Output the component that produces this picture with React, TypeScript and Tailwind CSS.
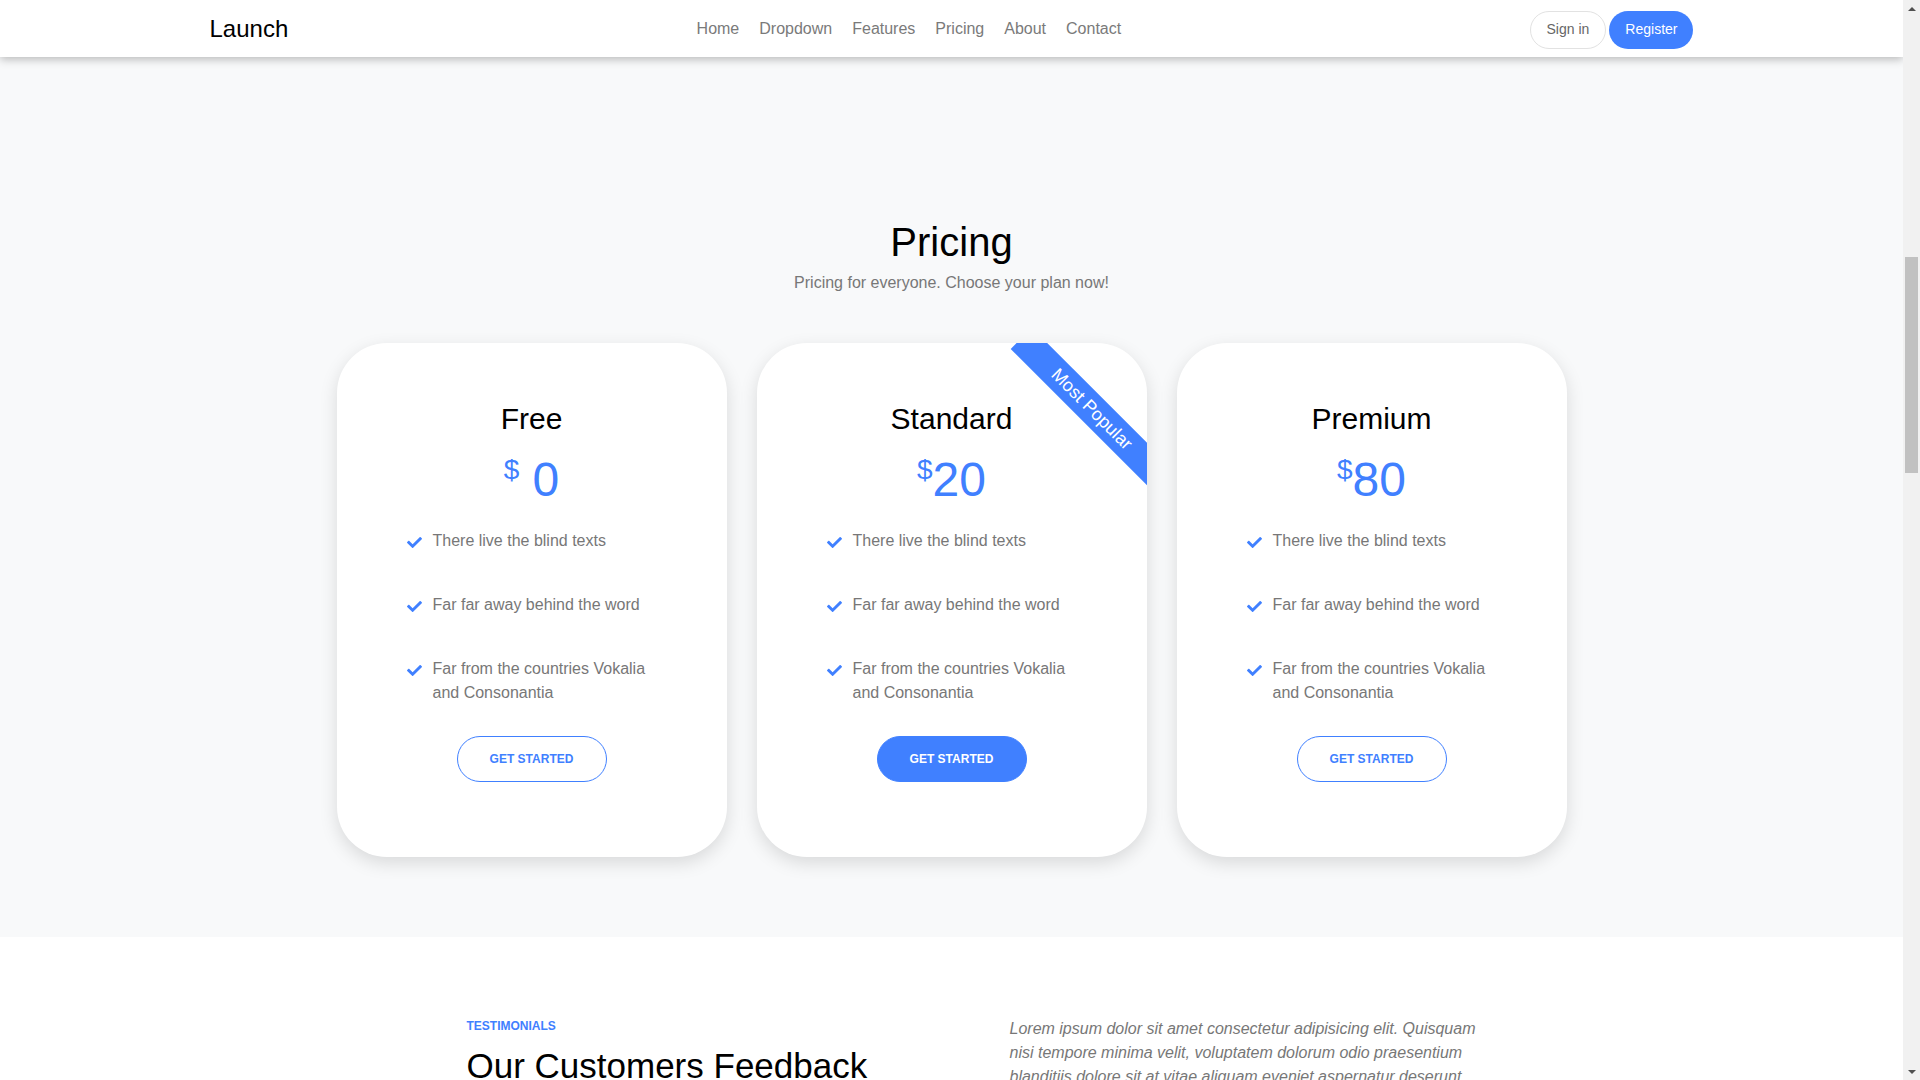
import { FaCheck } from "react-icons/fa";

const plans = [
  { name: "Free", price: "0", spaced: true, primary: false, ribbon: false },
  { name: "Standard", price: "20", spaced: false, primary: true, ribbon: true },
  { name: "Premium", price: "80", spaced: false, primary: false, ribbon: false },
];

const features = [
  "There live the blind texts",
  "Far far away behind the word",
  "Far from the countries Vokalia and Consonantia",
];

const navLinks = ["Home", "Dropdown", "Features", "Pricing", "About", "Contact"];

function PlanCard({ plan }: { plan: (typeof plans)[number] }) {
  return (
    <div className="relative w-[390px] overflow-hidden rounded-[50px] bg-white pt-[58px] pb-[75px] shadow-[0_6px_18px_rgba(0,0,0,0.13)]">
      {plan.ribbon && (
        <div className="absolute left-[235px] top-[51px] flex h-[30px] w-[200px] rotate-45 items-center justify-center bg-[#4080ff] text-[18px] text-white">
          Most Popular
        </div>
      )}
      <h3 className="text-center text-[30px] leading-[36px] text-black">{plan.name}</h3>
      <div className="mt-[19px] flex items-start justify-center text-[#4080ff]">
        <span className="text-[28px] leading-none">$</span>
        <span className={`text-[48px] leading-none ${plan.spaced ? "ml-[13px]" : ""}`}>{plan.price}</span>
      </div>
      <ul className="mt-[25px] flex flex-col gap-10 px-[70px]">
        {features.map((f) => (
          <li key={f} className="flex items-start text-[16px] leading-[24px] text-[#777777]">
            <FaCheck className="mt-[6px] mr-[11px] shrink-0 text-[#4080ff]" size={15} />
            <span>{f}</span>
          </li>
        ))}
      </ul>
      <div className="mt-[31px] flex justify-center">
        <button
          className={`h-[46px] w-[150px] rounded-full border border-[#4080ff] text-[12px] font-bold ${
            plan.primary ? "bg-[#4080ff] text-white" : "bg-white text-[#4080ff]"
          }`}>
          GET STARTED
        </button>
      </div>
    </div>
  );
}

function Scrollbar() {
  return (
    <div className="flex h-full w-[17px] shrink-0 flex-col bg-[#f1f1f1]">
      <div className="flex h-[17px] items-center justify-center">
        <div className="h-0 w-0 border-x-[4px] border-b-[4px] border-x-transparent border-b-[#505050]" />
      </div>
      <div className="flex-1 px-[2px] pt-[240px]">
        <div className="h-[216px] bg-[#c1c1c1]" />
      </div>
      <div className="flex h-[17px] items-center justify-center">
        <div className="h-0 w-0 border-x-[4px] border-t-[4px] border-x-transparent border-t-[#505050]" />
      </div>
    </div>
  );
}

export default function App() {
  return (
    <div className="flex h-screen overflow-hidden bg-white font-['Liberation_Sans',Arial,sans-serif]">
      <div className="flex-1 overflow-hidden">
        {/* Navbar */}
        <header className="relative z-10 h-[57px] bg-white shadow-[0_2px_9px_rgba(0,0,0,0.28)]">
          <div className="mx-auto flex h-full w-[1484px] items-center">
            <span className="text-[24px] text-black">Launch</span>
            <nav className="mx-auto flex gap-5 text-[16px] text-[#7a7a7a]">
              {navLinks.map((l) => (
                <a key={l} href="#">
                  {l}
                </a>
              ))}
            </nav>
            <div className="mt-[2px] flex items-center gap-[3px]">
              <button className="h-[38px] rounded-full border border-[#e2e2e2] px-4 text-[14px] text-[#666]">Sign in</button>
              <button className="h-[38px] rounded-full bg-[#4080ff] px-4 text-[14px] text-white">Register</button>
            </div>
          </div>
        </header>

        {/* Pricing */}
        <section className="bg-[#f8f9fa] pt-[161px] pb-[80px]">
          <h2 className="text-center text-[40px] leading-[48px] text-black">Pricing</h2>
          <p className="mt-[5px] text-center text-[16px] leading-[24px] text-[#777777]">
            Pricing for everyone. Choose your plan now!
          </p>
          <div className="mt-[48px] flex justify-center gap-[30px]">
            {plans.map((p) => (
              <PlanCard key={p.name} plan={p} />
            ))}
          </div>
        </section>

        {/* Testimonials */}
        <section className="bg-white pt-[80px] pb-[80px]">
          <div className="mx-auto flex w-[1140px]">
            <div className="ml-[85px] w-[543px]">
              <div className="text-[12px] leading-[18px] font-bold text-[#4080ff]">TESTIMONIALS</div>
              <h2 className="mt-[10px] text-[35px] leading-[42px] text-black">Our Customers Feedback</h2>
            </div>
            <p className="w-[480px] text-[16px] leading-[24px] text-[#777777] italic">
              Lorem ipsum dolor sit amet consectetur adipisicing elit. Quisquam nisi tempore minima velit, voluptatem
              dolorum odio praesentium blanditiis dolore sit at vitae aliquam eveniet aspernatur deserunt voluptatibus,
              ipsum quae exercitationem reiciendis neque.
            </p>
          </div>
        </section>
      </div>
      <Scrollbar />
    </div>
  );
}
